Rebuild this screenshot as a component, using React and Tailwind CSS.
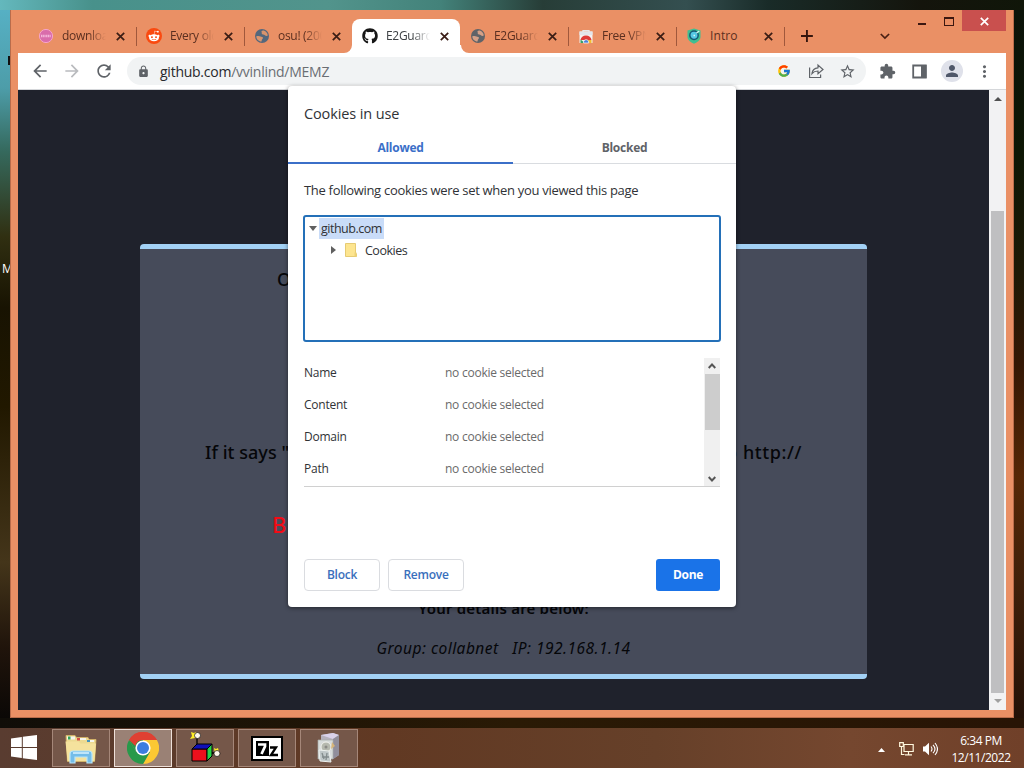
import React from "react";
import { MdArrowBack, MdArrowForward, MdRefresh, MdLock, MdStarBorder, MdExtension, MdPerson, MdMoreVert } from "react-icons/md";
import { FaGithub, FaRedditAlien } from "react-icons/fa";
import { FcGoogle } from "react-icons/fc";

function DownloadIcon() {
  return (
    <svg className="size-4" viewBox="0 0 16 16">
      <circle cx="8" cy="8" r="6.6" fill="#d96cab" stroke="#f7a3c9" strokeWidth="1" />
      <path d="M3 8H13" stroke="#f4b6da" strokeWidth="2.6" strokeDasharray="1.2 .5" />
    </svg>
  );
}

function RedditIcon() {
  return (
    <span className="flex size-4 items-center justify-center rounded-full bg-[#fa4a10]">
      <FaRedditAlien className="size-3 text-white" />
    </span>
  );
}

function GlobeIcon({ blue }) {
  return (
    <svg className="size-4" viewBox="0 0 16 16">
      <circle cx="8" cy="8" r="7" fill={blue ? "#54677c" : "#5f6368"} />
      <path d="M2.300 8.300c1.500-.6 3.200-.5 4.200.2.900.7 2.400.2 2.500 1.300.1 1-1.300 1.200-1.500 3.800-2.800-.2-5.200-2.400-5.200-5.300zM7.300 3.300c.8-.8 1.700-.9 2.500-.7 2.300.8 3.800 2.700 4 4.900-1 .6-2.200.5-2.900-.3-.7-.9-3-.2-3.200-1.700-.1-.9.3-1.500-.4-2.200z" fill={blue ? "#d9946d" : "#d4a087"} />
    </svg>
  );
}

function StoreIcon() {
  return (
    <svg className="size-4" viewBox="0 0 16 16">
      <path d="M5 4.500V2.700h6v1.800" fill="none" stroke="#e8e8ec" strokeWidth="1.300" />
      <path d="M1.500 3.500h13V15h-13z" fill="#f4f1f1" />
      <path d="M1.500 3.500h13V7h-13z" fill="#e3e6ec" />
      <path d="M2.500 12a5.600 5.600 0 0 1 11 0H8z" fill="#df3c3a" />
      <path d="M2.500 11.500 7 15H2.500z" fill="#34a064" />
      <path d="M9 12h4.500v3H8z" fill="#f4bd2c" />
      <path d="M5.600 15a2.600 2.600 0 1 1 5 0z" fill="#4b81d8" stroke="#fff" strokeWidth=".7" />
    </svg>
  );
}

function ShieldIcon() {
  return (
    <svg className="size-4" viewBox="0 0 16 16">
      <path d="M8 .5 14.500 2.500V9c0 3.500-4 5.500-6.500 6.800C5.500 14.500 1.500 12.500 1.500 9V2.500z" fill="#3ebf92" />
      <circle cx="8" cy="7.300" r="4.200" fill="#55c7e4" stroke="#155a75" strokeWidth="1.500" />
      <path d="m10.500 5 2.800-2M7.500 7.500h1.500" stroke="#d8f5f3" strokeWidth="1.300" />
    </svg>
  );
}

const TABS = [
  { title: "download", icon: <DownloadIcon /> },
  { title: "Every old", icon: <RedditIcon />, lead: true },
  { title: "osu! (2007", icon: <GlobeIcon blue />, lead: true },
  { title: "E2Guardian", icon: <FaGithub className="size-4 text-[#161616]" />, active: true },
  { title: "E2Guardian", icon: <GlobeIcon /> },
  { title: "Free VPN", icon: <StoreIcon />, lead: true },
  { title: "Intro", icon: <ShieldIcon />, lead: true, short: true },
];

function CloseMark() {
  return (
    <svg className="size-[9px] shrink-0" viewBox="0 0 9 9">
      <path d="m.8.8 7.400 7.400m0-7.400L.8 8.200" stroke="currentColor" strokeWidth="1.700" />
    </svg>
  );
}

function Tab({ tab }) {
  const shape = tab.active ? "rounded-t-lg bg-white text-[#3c4043]" : "text-[#5b2f20]";
  return (
    <div className={"relative flex h-[34px] w-[108px] shrink-0 items-center pl-[10px] " + shape}>
      {tab.lead && <span className="absolute left-0 top-2 h-[19px] w-px bg-[#a0583c]" />}
      {tab.active && (
        <svg className="absolute -left-2 bottom-0 h-2 w-[125px]" viewBox="0 0 125 8">
          <path d="M0 8a8 8 0 0 0 8-8v8zM125 8a8 8 0 0 1-8-8h-2v8z" fill="#fff" />
        </svg>
      )}
      {tab.icon}
      <span className={"ml-2 w-[44px] overflow-hidden whitespace-nowrap text-[12px] leading-4 " + (tab.short ? "tracking-[0.1px]" : "tracking-[-0.3px] [mask-image:linear-gradient(to_right,black_60%,transparent_100%)]")}>{tab.title}</span>
      <span className="ml-[10px] text-[#3a1d15]"><CloseMark /></span>
    </div>
  );
}

function TitleBar() {
  return (
    <div className="flex h-[43px] pl-[10px]">
      <div className="flex items-end">
        {TABS.map((tab, i) => <Tab key={i} tab={tab} />)}
      </div>
      <span className="mt-[9px] flex h-[34px] w-px items-center"><span className="h-[19px] w-px bg-[#a0583c]" /></span>
      <svg className="ml-4 mt-5 size-3" viewBox="0 0 12 12"><path d="M6 0v12M0 6h12" stroke="#35150d" strokeWidth="1.900" /></svg>
      <svg className="ml-[67px] mt-[23px] h-[7px] w-[10px]" viewBox="0 0 10 7"><path d="m.8 1 4.200 4.200L9.200 1" fill="none" stroke="#4a2013" strokeWidth="1.700" /></svg>
      <span className="ml-[28px] mt-[13px] h-[2px] w-2 bg-[#3b1710]" />
      <span className="ml-[18px] mt-[7px] h-[9px] w-[10px] border border-t-2 border-[#3b1710]" />
      <span className="ml-[8px] flex h-[21px] w-[45px] items-center justify-center bg-[#c9504e] pl-[2px] pt-[2px] text-white"><CloseMark /></span>
    </div>
  );
}

function Toolbar() {
  return (
    <div className="flex h-[37px] items-center border-b border-[#d5d7da] bg-white text-[#5f6368]">
      <MdArrowBack className="ml-[12px] size-5" />
      <MdArrowForward className="ml-3 size-5 text-[#b9bbbe]" />
      <MdRefresh className="ml-3 size-5" />
      <div className="ml-[13px] flex h-7 w-[739px] items-center rounded-full bg-[#f1f3f4]">
        <MdLock className="ml-[10px] size-[13px]" />
        <span className="ml-[10px] text-[14px] tracking-[-0.25px] text-[#6a6e73]"><span className="text-[#28292c]">github.com</span>/vvinlind/MEMZ</span>
        <FcGoogle className="ml-auto size-[14px]" />
        <svg className="ml-[17px] size-4" viewBox="0 0 16 16" fill="none" stroke="currentColor" strokeWidth="1.200">
          <path d="M1.600 4.500v10h11v-3" />
          <path d="M4 10.500c.5-4 2.500-5.500 6-5.700V2l5 4.500-5 4.300V8C7 8 5.500 8.700 4 10.500z" />
        </svg>
        <MdStarBorder className="ml-[15px] mr-[10px] size-[17px]" />
      </div>
      <MdExtension className="ml-[13px] size-[17px]" />
      <svg className="ml-4 size-[15px]" viewBox="0 0 15 15"><path d="M1.200 1.500h12.600v12H1.200z" fill="none" stroke="currentColor" strokeWidth="1.800" /><path d="M9 1h5.500v13H9z" fill="currentColor" /></svg>
      <span className="ml-[14px] flex size-[22px] items-center justify-center rounded-full bg-[#dfe1ea]"><MdPerson className="size-[18px] text-[#4f5769]" /></span>
      <MdMoreVert className="ml-[12px] size-[19px]" />
    </div>
  );
}

function Page() {
  return (
    <div className="flex h-[620px]">
      <div className="w-[971px] overflow-hidden bg-[#1f222c] pl-[122px] pt-[154px]">
        <div className="h-[435px] w-[727px] overflow-hidden whitespace-nowrap rounded-[4px] border-y-[5px] border-[#a2d1f5] bg-[#464b5a] font-['Noto_Sans'] text-[#050609]">
          <div className="mt-[17px] h-[26px] pl-[137px] text-[18px] font-medium leading-[26px]">O</div>
          <div className="mt-[147px] flex h-[26px] pl-[65px] text-[18px] font-medium leading-[26px]">
            <span className="w-[521px] tracking-[0.05px]">If it says "</span><span className="tracking-[0.6px]">o http://</span>
          </div>
          <div className="mt-[44px] h-[30px] pl-[132px] text-[22px] font-medium leading-[30px] text-[#f30c16]">B</div>
          <div className="mt-[59px] h-5 text-center text-[15px] font-semibold leading-5 tracking-[0.2px]">Your details are below:</div>
          <div className="mt-[20px] h-5 whitespace-pre text-center text-[15.5px] italic leading-5 tracking-[0.48px]">{"Group: collabnet   IP: 192.168.1.14"}</div>
        </div>
      </div>
      <div className="flex w-[17px] flex-col items-center bg-[#f2f2f3]">
        <svg className="mt-[7px] h-1 w-2" viewBox="0 0 8 4"><path d="M4 0l4 4H0z" fill="#505050" /></svg>
        <span className="mt-[110px] h-[482px] w-[13px] bg-[#bfbfc1]" />
        <svg className="mt-[6px] h-1 w-2" viewBox="0 0 8 4"><path d="M4 4l4-4H0z" fill="#a0a0a0" /></svg>
      </div>
    </div>
  );
}

function CookieDialog() {
  return (
    <div className="absolute left-[288px] top-[86px] flex h-[521px] w-[448px] flex-col rounded-[4px] bg-white text-[12px] text-[#303236] shadow-[0_1px_4px_rgba(0,0,0,0.5)]">
      <h1 className="mt-[18px] h-5 pl-4 text-[14.5px] leading-5 tracking-[-0.12px]">Cookies in use</h1>
      <div className="mt-[7px] flex h-[33px] text-center text-[12px] font-bold leading-[34px] tracking-[-0.25px]">
        <div className="w-[225px] border-b-2 border-[#3b6fc8] text-[#3b6fc8]">Allowed</div>
        <div className="flex-1 border-b border-[#d9dce0] text-[#5f6368]">Blocked</div>
      </div>
      <p className="mt-[16px] h-5 whitespace-nowrap pl-4 text-[13px] leading-5 tracking-[-0.3px]">The following cookies were set when you viewed this page</p>
      <div className="ml-[15px] mt-[15px] h-[127px] w-[418px] rounded-[3px] border-2 border-[#2470b8] pt-[1px]">
        <div className="flex h-[21px] items-center pl-1">
          <svg className="h-[5px] w-2" viewBox="0 0 8 5"><path d="M0 0h8L4 5z" fill="#606060" /></svg>
          <span className="ml-[2px] flex h-[21px] w-[65px] items-center bg-[#c9dcf8] pl-[2px] pt-px text-[12.5px] tracking-[-0.5px]">github.com</span>
        </div>
        <div className="flex h-[22px] items-center pl-[26px]">
          <svg className="h-2 w-[5px]" viewBox="0 0 5 8"><path d="M0 0v8l5-4z" fill="#606060" /></svg>
          <svg className="ml-[9px] h-[14px] w-3" viewBox="0 0 12 14">
            <path d="M.5.500h10v9.500l1 1v2.500H.5z" fill="#fde58f" stroke="#e6cb73" />
            <path d="M9.500 9.500h2v4h-2z" fill="#eed277" />
          </svg>
          <span className="ml-2 pt-[2px] text-[12.500px] tracking-[-0.5px]">Cookies</span>
        </div>
      </div>
      <div className="mx-4 mt-[16px] flex h-[129px] border-b border-[#d0d0d0]">
        <div className="grid flex-1 grid-cols-[141px_1fr] content-start text-[12px] tracking-[-0.25px]">
          {["Name", "Content", "Domain", "Path"].map((name, i) => (
            <React.Fragment key={name}>
              <span className={i === 0 ? "h-[31px] leading-[30px]" : "h-8 leading-8"}>{name}</span>
              <span className={(i === 0 ? "h-[31px] leading-[30px]" : "h-8 leading-8") + " text-[#6a6a6a]"}>no cookie selected</span>
            </React.Fragment>
          ))}
        </div>
        <div className="flex w-4 flex-col items-center bg-[#f0f0f0]">
          <svg className="mt-[5px] h-[6px] w-2" viewBox="0 0 8 6"><path d="m.7 5 3.300-3.500L7.300 5" fill="none" stroke="#555" strokeWidth="1.900" /></svg>
          <span className="mt-[5px] h-[56px] w-[15px] bg-[#cdcdcd]" />
          <svg className="mt-[46px] h-[6px] w-2" viewBox="0 0 8 6"><path d="m.7 1 3.300 3.500L7.300 1" fill="none" stroke="#555" strokeWidth="1.900" /></svg>
        </div>
      </div>
      <div className="mx-4 mt-[72px] flex h-8 gap-2 text-[12px] font-semibold tracking-[-0.25px]">
        <button className="w-[76px] rounded-[4px] border border-[#dadce0] text-[#3a6fbc]">Block</button>
        <button className="w-[76px] rounded-[4px] border border-[#dadce0] text-[#3a6fbc]">Remove</button>
        <button className="ml-auto w-16 rounded-[3px] bg-[#1a73e8] font-bold tracking-[-0.3px] text-white">Done</button>
      </div>
    </div>
  );
}

function FolderIcon() {
  return (
    <svg className="h-8 w-[34px]" viewBox="0 0 34 32">
      <path d="M2 3.500h9l1.500 2H24l1 2h7l-1.500 22H3.500z" fill="#edda91" stroke="#d9b968" strokeWidth=".8" />
      <path d="M3 4.500h8v3H3zM13 6h9v2h-9zM23 8h7v2h-7z" fill="#f5f6ed" />
      <path d="M4 4.500h2.500v3H4z" fill="#31a45a" /><path d="M13 6h3v2.500h-3z" fill="#d65045" /><path d="M23 8h3v2h-3z" fill="#4593bb" />
      <path d="M1.500 9.500h13l2 2H32L30.500 29H3.500z" fill="#f5e29d" />
      <path d="M6 31V22q0-3 3-3h16q3 0 3 3v9h-5v-6H11v6z" fill="#74bde9" stroke="#b8e5fa" strokeWidth="1.200" />
      <path d="M9 21h16" stroke="#d8f3ff" strokeWidth="1.500" />
    </svg>
  );
}

function ChromeIcon() {
  return (
    <svg className="size-8" viewBox="0 0 32 32">
      <path d="M16 16 2.140 8A16 16 0 0 1 29.860 8z" fill="#df4032" />
      <path d="M16 16V8h13.860A16 16 0 0 1 16 32l6.930-12z" fill="#fbc833" />
      <path d="m16 16 6.930 4L16 32A16 16 0 0 1 2.140 8l6.930 12z" fill="#28994a" />
      <path d="M2.140 8 9.070 20 16 16 16 8z" fill="#28994a" />
      <path d="M2.140 8A16 16 0 0 1 29.860 8H16a8 8 0 0 0-7.700 6z" fill="#df4032" />
      <circle cx="16" cy="16" r="7.600" fill="#fff" /><circle cx="16" cy="16" r="6" fill="#3b7de0" />
    </svg>
  );
}

function BoxIcon() {
  return (
    <svg className="h-8 w-[34px]" viewBox="0 0 34 32">
      <path d="M9 12V4M23 21h6" stroke="#000" strokeWidth="1.300" />
      <path d="M4 17h15v12H4z" fill="#ed101d" stroke="#000" />
      <path d="m4 17 5-5h15l-5 5z" fill="#1010b8" stroke="#000" />
      <path d="m19 17 5-5v12l-5 5z" fill="#27d348" stroke="#000" />
      <path d="m3 0 3 1 2-1 1 4-2 2-5 1 2-3z" fill="#ffed27" /><circle cx="9.500" cy="3.500" r="3" fill="#fff8ed" stroke="#111" strokeWidth=".7" />
      <path d="m26 16 2 1 2-1 1 4-4 2z" fill="#ffed27" /><circle cx="29" cy="21.500" r="3" fill="#fff8ed" stroke="#111" strokeWidth=".7" />
    </svg>
  );
}

function SevenZipIcon() {
  return (
    <svg className="h-[25px] w-8" viewBox="0 0 32 25">
      <path d="M1 1h30v23H1z" fill="#fff" stroke="#000" strokeWidth="2" />
      <path d="M5 5h13v15H5z" fill="#000" />
      <path d="M7 8.500h7v2l-3.500 7.500" fill="none" stroke="#fff" strokeWidth="2.700" />
      <path d="M19 11.500h6L20 19h7" fill="none" stroke="#000" strokeWidth="2.300" />
    </svg>
  );
}

function InstallerIcon() {
  return (
    <svg className="h-8 w-7" viewBox="0 0 28 32">
      <path d="m6 3 12-2 6 2v20l-6 4L6 24z" fill="#b5b1bd" />
      <path d="m6 3 12-2 6 2-6 4z" fill="#dad2eb" /><path d="m18 7 6-4v20l-6 4z" fill="#918e9b" />
      <path d="M3 8h15v19H3z" fill="#d8dcdb" stroke="#a6adab" strokeWidth=".7" />
      <circle cx="11" cy="15" r="5" fill="#b6b9ae" stroke="#f2f3ed" /><circle cx="11" cy="15" r="1.500" fill="#8b8b86" />
      <path d="m4 18 10 1 2 11-11-1z" fill="#bfc7c8" stroke="#edf1ef" /><path d="m7 21 2 6m3-6-1 7m-4-3h7" stroke="#828b8c" strokeWidth="1.300" />
      <path d="m17 10-1 7 4-3" fill="#d7b679" />
    </svg>
  );
}

function Taskbar() {
  const items = [<FolderIcon />, <ChromeIcon />, <BoxIcon />, <SevenZipIcon />, <InstallerIcon />];
  return (
    <div className="flex h-10 bg-[linear-gradient(90deg,#593c30_0%,#613923_38%,#664029_64%,#75472f_83%,#704029_100%)] text-white">
      <svg className="ml-[11px] mr-[15px] mt-[7px] h-[25px] w-[26px]" viewBox="0 0 26 25">
        <path d="M0 3.500 10.800 2v10H0zM11.800 1.850 26 0v12H11.800zM0 13h10.800v10L0 21.500zM11.800 13H26v12l-14.200-1.850z" fill="#fff" />
      </svg>
      <div className="mt-px flex gap-1">
        {items.map((icon, i) => (
          <div key={i} className={"flex h-[38px] w-[58px] items-center justify-center border " + (i === 1 ? "border-[#eee0d9] bg-[#9a8175]" : "border-[#a58779] bg-[#755749]")}>{icon}</div>
        ))}
      </div>
      <div className="ml-auto flex items-center">
        <svg className="mr-[14px] mt-[3px] h-1 w-[7px]" viewBox="0 0 7 4"><path d="M3.500 0 7 4H0z" fill="#fff" /></svg>
        <svg className="mr-[9px] mt-[2px] h-[14px] w-[15px]" viewBox="0 0 15 14" fill="none" stroke="#fff8de" strokeWidth="1.200">
          <path d="M5 2.500h9.200v7H5zM9.500 9.500v3M6 12.900h7M2.500 4.500v8h3" /><path d="M.7.700h3.600v3.800H.7z" />
        </svg>
        <svg className="mr-[13px] mt-[2px] h-[14px] w-[15px]" viewBox="0 0 15 14">
          <path d="M0 4.500h2L6 .8v12.400L2 9.500H0z" fill="#fff" /><path d="M8 4.500q2 2.500 0 5M10 2.800q4 4.200 0 8.400M12 1q5 6 0 12" fill="none" stroke="#fff" strokeWidth="1.100" />
        </svg>
        <div className="mr-[13px] mt-[2px] w-[60px] whitespace-nowrap text-center text-[12px] leading-[17px] tracking-[-0.45px]">
          <div>6:34 PM</div><div>12/11/2022</div>
        </div>
      </div>
    </div>
  );
}

export default function App() {
  return (
    <div className="relative flex h-[768px] w-[1024px] flex-col overflow-hidden bg-[#141006] font-['Open_Sans','Noto_Sans',sans-serif]">
      <div className="h-[10px] shrink-0 bg-[linear-gradient(90deg,#64b8bd_0%,#48918b_9%,#52948c_32%,#43827a_43%,#273d37_53%,#344f50_67%,#192b28_75%,#14140c_90%,#101609_100%)]" />
      <div className="flex h-[708px] shrink-0">
        <div className="relative w-[10px] overflow-hidden bg-[linear-gradient(180deg,#56b0c4_0%,#4d9da9_11%,#35695d_20%,#302f11_32%,#181302_42%,#211800_56%,#44351a_78%,#20140b_90%,#0b0806_100%)]">
          <span className="absolute left-[8px] top-[46px] h-[9px] w-[2px] bg-[#101010]" />
          <span className="absolute left-[2px] top-[251px] text-[12px] leading-4 text-white">M</span>
        </div>
        <div className="h-[708px] w-[1004px] border-x border-b border-[#b96c4b] bg-[#ea9065] px-[7px]">
          <TitleBar />
          <Toolbar />
          <Page />
        </div>
        <div className="w-[10px] bg-[linear-gradient(180deg,#0b1309_0%,#0e1705_20%,#1e1906_37%,#351704_50%,#562706_66%,#40200a_81%,#241107_100%)]" />
      </div>
      <div className="h-[10px] shrink-0 bg-[linear-gradient(90deg,#100d08,#2a1a05_50%,#281405)]" />
      <Taskbar />
      <CookieDialog />
    </div>
  );
}
